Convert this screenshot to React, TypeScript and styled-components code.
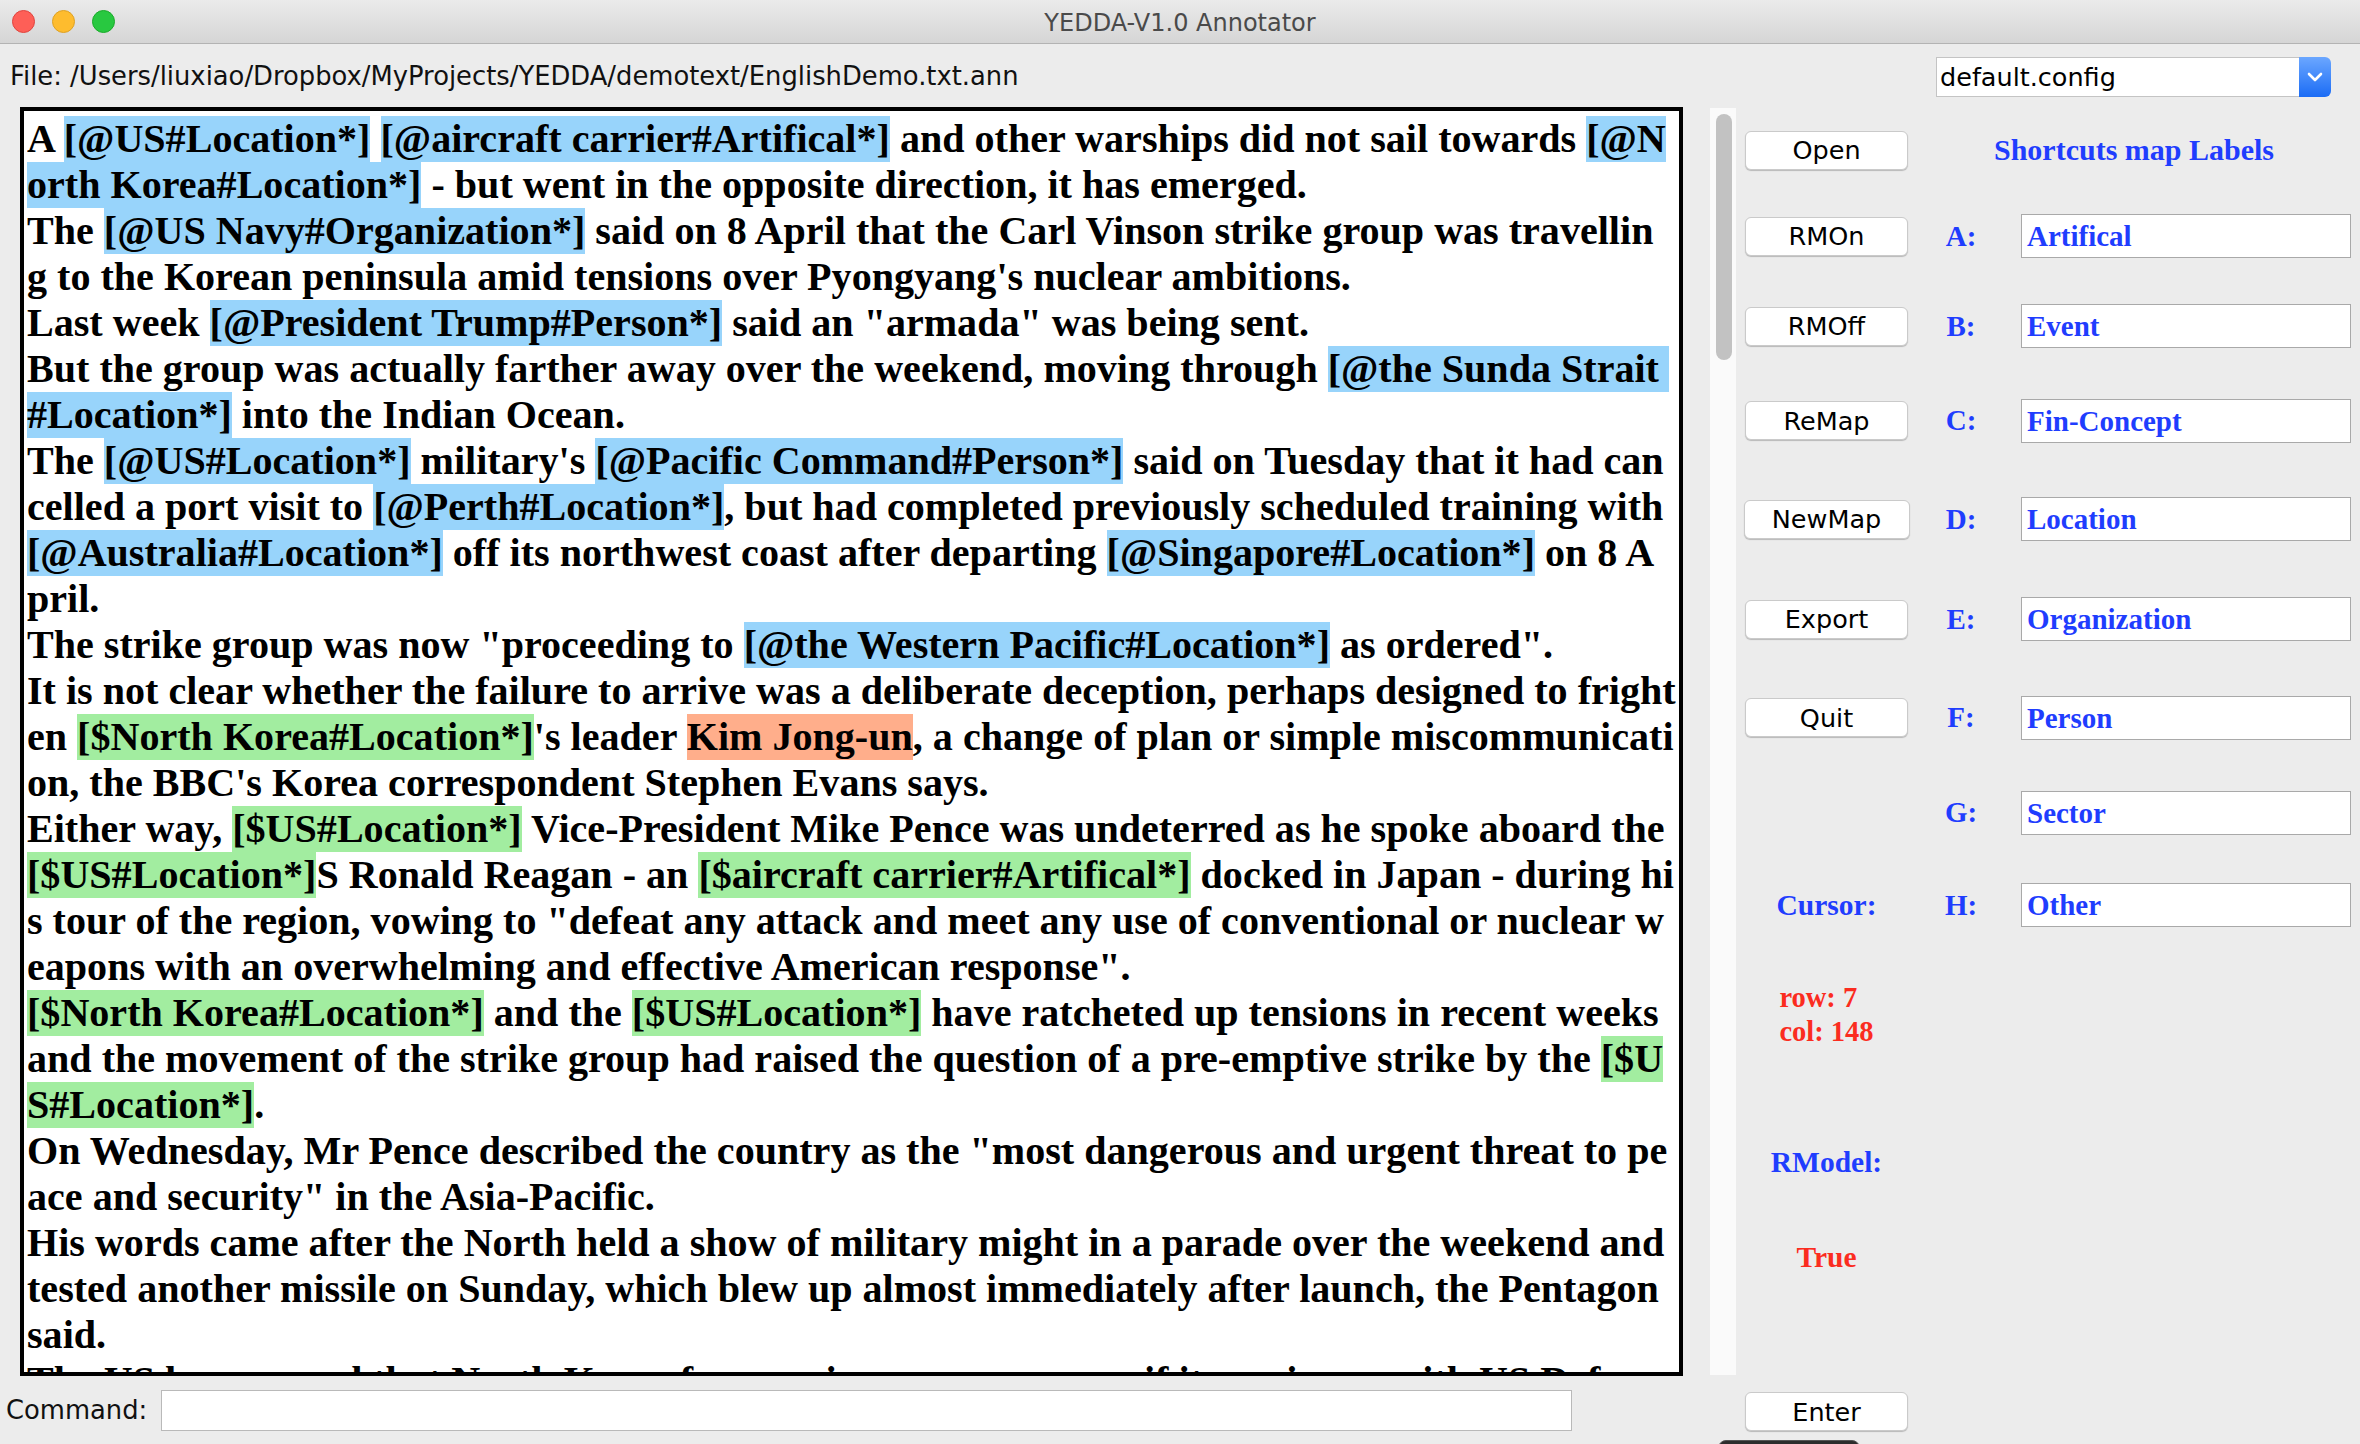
import React from "react";
import styled, { createGlobalStyle } from "styled-components";

type Kind = "plain" | "anno" | "rec" | "sel";
type Seg = [string, Kind?];

const GlobalStyle = createGlobalStyle`
  html, body {
    margin: 0;
    padding: 0;
    background: #ececec;
  }
  * {
    box-sizing: border-box;
  }
`;

const lines: Seg[][] = [
  [["A "], ["[@US#Location*]", "anno"], [" "], ["[@aircraft carrier#Artifical*]", "anno"], [" and other warships did not sail towards "], ["[@N", "anno"]],
  [["orth Korea#Location*]", "anno"], [" - but went in the opposite direction, it has emerged."]],
  [["The "], ["[@US Navy#Organization*]", "anno"], [" said on 8 April that the Carl Vinson strike group was travellin"]],
  [["g to the Korean peninsula amid tensions over Pyongyang's nuclear ambitions."]],
  [["Last week "], ["[@President Trump#Person*]", "anno"], [' said an "armada" was being sent.']],
  [["But the group was actually farther away over the weekend, moving through "], ["[@the Sunda Strait ", "anno"]],
  [["#Location*]", "anno"], [" into the Indian Ocean."]],
  [["The "], ["[@US#Location*]", "anno"], [" military's "], ["[@Pacific Command#Person*]", "anno"], [" said on Tuesday that it had can"]],
  [["celled a port visit to "], ["[@Perth#Location*]", "anno"], [", but had completed previously scheduled training with"]],
  [["[@Australia#Location*]", "anno"], [" off its northwest coast after departing "], ["[@Singapore#Location*]", "anno"], [" on 8 A"]],
  [["pril."]],
  [['The strike group was now "proceeding to '], ["[@the Western Pacific#Location*]", "anno"], [' as ordered".']],
  [["It is not clear whether the failure to arrive was a deliberate deception, perhaps designed to fright"]],
  [["en "], ["[$North Korea#Location*]", "rec"], ["'s leader "], ["Kim Jong-un", "sel"], [", a change of plan or simple miscommunicati"]],
  [["on, the BBC's Korea correspondent Stephen Evans says."]],
  [["Either way, "], ["[$US#Location*]", "rec"], [" Vice-President Mike Pence was undeterred as he spoke aboard the"]],
  [["[$US#Location*]", "rec"], ["S Ronald Reagan - an "], ["[$aircraft carrier#Artifical*]", "rec"], [" docked in Japan - during hi"]],
  [['s tour of the region, vowing to "defeat any attack and meet any use of conventional or nuclear w']],
  [['eapons with an overwhelming and effective American response".']],
  [["[$North Korea#Location*]", "rec"], [" and the "], ["[$US#Location*]", "rec"], [" have ratcheted up tensions in recent weeks"]],
  [["and the movement of the strike group had raised the question of a pre-emptive strike by the "], ["[$U", "rec"]],
  [["S#Location*]", "rec"], ["."]],
  [['On Wednesday, Mr Pence described the country as the "most dangerous and urgent threat to pe']],
  [['ace and security" in the Asia-Pacific.']],
  [["His words came after the North held a show of military might in a parade over the weekend and"]],
  [["tested another missile on Sunday, which blew up almost immediately after launch, the Pentagon"]],
  [["said."]],
  [["The US has warned that North Korea faces serious consequences if it carries on with US Defense Se"]],
];

const labels = [
  { key: "A", name: "Artifical", button: "RMOn" },
  { key: "B", name: "Event", button: "RMOff" },
  { key: "C", name: "Fin-Concept", button: "ReMap" },
  { key: "D", name: "Location", button: "NewMap" },
  { key: "E", name: "Organization", button: "Export" },
  { key: "F", name: "Person", button: "Quit" },
  { key: "G", name: "Sector" },
];

const markColors: Record<Kind, string> = {
  plain: "transparent",
  anno: "#98d4fb",
  rec: "#a2eda0",
  sel: "#ffae8b",
};

export default function App() {
  return (
    <>
      <GlobalStyle />
      <Window>
        <TitleBar>
          <Lights>
            <Light $fill="#fe5f57" $edge="#e0443e" />
            <Light $fill="#febc2e" $edge="#dea123" />
            <Light $fill="#28c840" $edge="#1aab29" />
          </Lights>
          <Title>YEDDA-V1.0 Annotator</Title>
          <span />
        </TitleBar>

        <FileRow>
          <UiText>File: /Users/liuxiao/Dropbox/MyProjects/YEDDA/demotext/EnglishDemo.txt.ann</UiText>
          <Combo>
            <ComboField>default.config</ComboField>
            <ComboButton>
              <svg width="16" height="10" viewBox="0 0 16 10">
                <path d="M2 2 L8 8 L14 2" fill="none" stroke="#fff" strokeWidth="2.6" strokeLinecap="round" strokeLinejoin="round" />
              </svg>
            </ComboButton>
          </Combo>
        </FileRow>

        <Main>
          <TextBox>
            {lines.map((line, i) => (
              <TextLine key={i}>
                {line.map(([text, kind = "plain"], j) => (
                  <Mark key={j} $kind={kind}>
                    {text}
                  </Mark>
                ))}
              </TextLine>
            ))}
          </TextBox>

          <Scrollbar>
            <Thumb />
          </Scrollbar>

          <Panel>
            <Button>Open</Button>
            <Header>Shortcuts map Labels</Header>
            {labels.map((l) => (
              <React.Fragment key={l.key}>
                {l.button && <Button $wide={l.button === "NewMap"}>{l.button}</Button>}
                <Letter>{l.key}:</Letter>
                <Entry>{l.name}</Entry>
              </React.Fragment>
            ))}
            <InfoLabel>Cursor:</InfoLabel>
            <Letter>H:</Letter>
            <Entry>Other</Entry>
            <InfoLabel $red $small>
              row: 7
              <br />
              col: 148
            </InfoLabel>
            <InfoLabel>RModel:</InfoLabel>
            <InfoLabel $red $tight>True</InfoLabel>
          </Panel>
        </Main>

        <BottomRow>
          <UiText>Command:</UiText>
          <CommandInput />
          <EnterButton>Enter</EnterButton>
        </BottomRow>

        <DockTab />
      </Window>
    </>
  );
}

const Window = styled.div`
  position: relative;
  width: 2360px;
  height: 1444px;
  display: flex;
  flex-direction: column;
  background: #ececec;
  overflow: hidden;
  font-family: "DejaVu Sans", "Liberation Sans", sans-serif;
`;

const TitleBar = styled.div`
  height: 44px;
  flex: none;
  display: grid;
  grid-template-columns: 1fr auto 1fr;
  align-items: center;
  background: linear-gradient(#ebebeb, #d5d5d5);
  border-bottom: 1px solid #b3b3b3;
`;

const Lights = styled.div`
  display: flex;
  gap: 17px;
  margin-left: 12px;
`;

const Light = styled.span<{ $fill: string; $edge: string }>`
  width: 23px;
  height: 23px;
  border-radius: 50%;
  background: ${(p) => p.$fill};
  border: 1px solid ${(p) => p.$edge};
`;

const Title = styled.div`
  font-size: 24px;
  color: #4a4a4a;
  padding-top: 2px;
`;

const FileRow = styled.div`
  height: 63px;
  flex: none;
  display: flex;
  align-items: center;
  justify-content: space-between;
  padding: 0 29px 0 10px;
`;

const UiText = styled.span`
  font-size: 25.8px;
  color: #111;
  white-space: nowrap;
`;

const Combo = styled.div`
  width: 395px;
  height: 40px;
  display: flex;
  margin-top: 2px;
`;

const ComboField = styled.div`
  flex: 1;
  background: #fff;
  border: 1px solid #c4c4c4;
  border-right: none;
  padding-left: 3px;
  font-size: 25.5px;
  line-height: 38px;
  color: #000;
`;

const ComboButton = styled.div`
  width: 32px;
  display: flex;
  align-items: center;
  justify-content: center;
  border-radius: 0 6px 6px 0;
  background: linear-gradient(#6ba7ff, #1b6cf5);
`;

const Main = styled.div`
  height: 1269px;
  flex: none;
  display: flex;
  align-items: flex-start;
`;

const TextBox = styled.div`
  margin-left: 20px;
  width: 1663px;
  height: 1269px;
  border: 4px solid #000;
  background: #fff;
  padding: 5px 0 0 3px;
  overflow: hidden;
  font-family: "Liberation Serif", "Times New Roman", serif;
  font-weight: 700;
  font-size: 40.1px;
  color: #000;
`;

const TextLine = styled.div`
  height: 46px;
  white-space: pre;
  overflow: hidden;
`;

const Mark = styled.span<{ $kind: Kind }>`
  display: inline-block;
  height: 46px;
  line-height: 46px;
  vertical-align: top;
  white-space: pre;
  background: ${(p) => markColors[p.$kind]};
`;

const Scrollbar = styled.div`
  margin: 1px 0 0 27px;
  width: 26px;
  height: 1267px;
  background: #fafafa;
  padding: 6px 0 0 6px;
`;

const Thumb = styled.div`
  width: 16px;
  height: 246px;
  border-radius: 8px;
  background: #c2c2c2;
`;

const Panel = styled.div`
  margin: 1px 0 0 9px;
  display: grid;
  grid-template-columns: 163px 106px 337px;
  grid-template-rows: 84px 88px 92px 97px 100px 100px 97px 93px 92px 128px 166px 24px;
  align-items: center;
`;

const Button = styled.div<{ $wide?: boolean }>`
  grid-column: 1;
  justify-self: center;
  width: ${(p) => (p.$wide ? 166 : 163)}px;
  height: 39px;
  display: flex;
  align-items: center;
  justify-content: center;
  background: #fff;
  border: 1px solid #cacaca;
  border-radius: 6px;
  box-shadow: 0 1px 1px rgba(0, 0, 0, 0.22);
  font-size: 25.5px;
  color: #000;
`;

const serifLabel = `
  font-family: "Liberation Serif", "Times New Roman", serif;
  font-weight: 700;
  font-size: 29px;
  color: #1f3dfe;
`;

const Header = styled.div`
  ${serifLabel}
  grid-column: 2 / 4;
  padding-left: 86px;
  font-size: 30px;
  white-space: nowrap;
`;

const Letter = styled.div`
  ${serifLabel}
  grid-column: 2;
  text-align: center;
`;

const Entry = styled.div`
  ${serifLabel}
  grid-column: 3;
  justify-self: end;
  width: 330px;
  height: 44px;
  background: #fff;
  border: 1px solid #a9a9a9;
  padding-left: 5px;
  line-height: 42px;
`;

const InfoLabel = styled.div<{ $red?: boolean; $small?: boolean; $tight?: boolean }>`
  ${serifLabel}
  grid-column: 1;
  justify-self: center;
  color: ${(p) => (p.$red ? "#fb2c1f" : "#1f3dfe")};
  font-size: ${(p) => (p.$small ? 28.5 : 29.5)}px;
  line-height: ${(p) => (p.$small ? "34px" : p.$tight ? "24px" : "normal")};
  text-align: left;
`;

const BottomRow = styled.div`
  height: 68px;
  flex: none;
  display: grid;
  grid-template-columns: 155px 1411px 173px 163px;
  align-items: center;
  padding-left: 6px;
`;

const CommandInput = styled.div`
  grid-column: 2;
  height: 41px;
  background: #fff;
  border: 1px solid #b9b9b9;
`;

const EnterButton = styled(Button)`
  grid-column: 4;
  margin-top: 3px;
`;

const DockTab = styled.div`
  position: absolute;
  left: 1718px;
  top: 1440px;
  width: 142px;
  height: 20px;
  border-radius: 8px 8px 0 0;
  background: #2c2c2c;
  border: 1px solid #555;
`;
